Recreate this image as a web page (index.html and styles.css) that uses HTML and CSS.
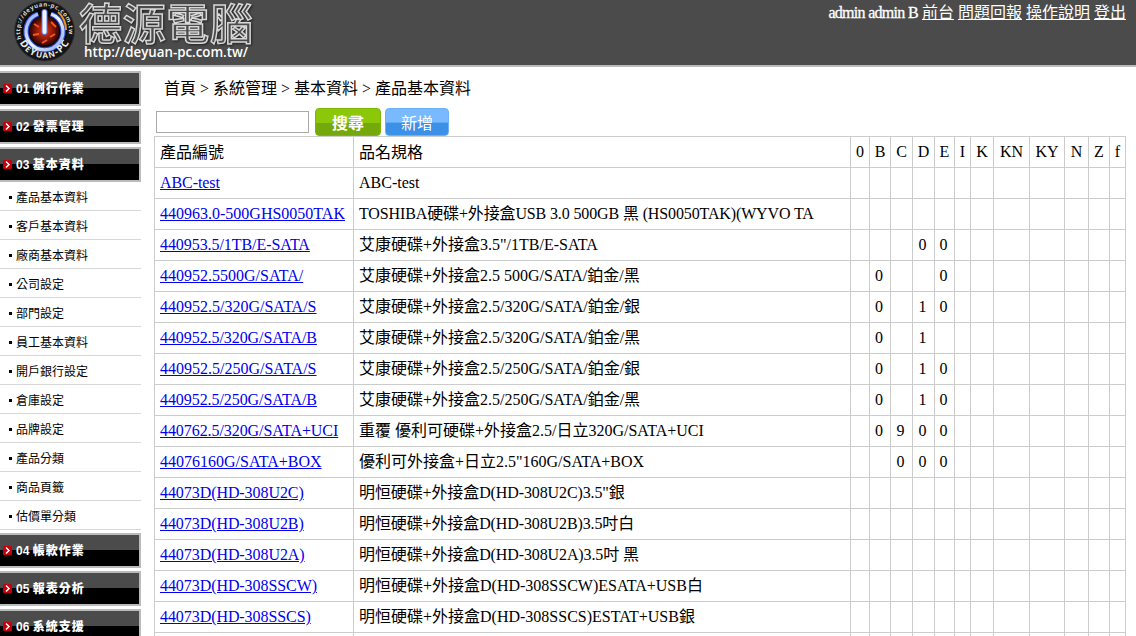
FILE: index.html
```
<!DOCTYPE html>
<html lang="zh-Hant">
<head>
<meta charset="utf-8">
<title>產品基本資料</title>
<link rel="stylesheet" href="styles.css">
</head>
<body>
<svg class="defs" width="0" height="0">
  <symbol id="arrow" viewBox="0 0 9 9"><rect width="9" height="9" rx="1" fill="#c4000c"/><path d="M3 1.500L6 4.500L3 7.500" fill="none" stroke="#fff" stroke-width="1.500"/></symbol>
</svg>
<header class="top">
  <svg class="logo" width="270" height="65" viewBox="0 0 270 65">
    <defs>
      <radialGradient id="core"><stop offset="0" stop-color="#e33a10"/><stop offset=".5" stop-color="#9d1b0a"/><stop offset="1" stop-color="#2a0604"/></radialGradient>
      <linearGradient id="ring" x1="0" y1="0" x2="1" y2="1"><stop offset="0" stop-color="#8fa8f0"/><stop offset=".5" stop-color="#f0f4ff"/><stop offset="1" stop-color="#8fa4ee"/></linearGradient>
      <path id="arcTop" d="M21.500 39A24.400 24.400 0 1 1 67.500 39"/>
      <path id="arcBottom" d="M18 38A27.500 27.500 0 0 0 71 38"/>
    </defs>
    <circle cx="44.500" cy="31" r="30" fill="#151515" stroke="#333"/>
    <circle cx="44.500" cy="31" r="22.500" fill="#050509"/>
    <circle cx="44.500" cy="31" r="15" fill="url(#core)"/>
    <path d="M34 24L39 27M51 22L56 27M33 35L39 34M50 37L55 34M42 43L47 40" stroke="#ef5a22" stroke-width="2"/>
    <path d="M38 14A18.500 18.500 0 1 0 51 14" fill="none" stroke="#2848c8" stroke-width="5.500"/>
    <path d="M38 14A18.500 18.500 0 1 0 51 14" fill="none" stroke="url(#ring)" stroke-width="3.200"/>
    <path d="M44.500 12V32" stroke="#5f7de0" stroke-width="6" stroke-linecap="round"/>
    <path d="M44.500 12V32" stroke="#f2f5ff" stroke-width="4" stroke-linecap="round"/>
    <path d="M58 12Q66 19 66 30" fill="none" stroke="#e8961e" stroke-width="2"/>
    <text class="seal-url"><textPath href="#arcTop" textLength="88">http://deyuan-pc.com.tw</textPath></text>
    <text class="seal-name"><textPath href="#arcBottom" startOffset="5" textLength="61">D<tspan class="small">E</tspan>Y<tspan class="small">UAN</tspan>-PC</textPath></text>
    <text class="brand" x="79" y="39.500" textLength="174">德源電腦</text>
    <text class="brand-url" x="84" y="57" textLength="164" lengthAdjust="spacingAndGlyphs">http://deyuan-pc.com.tw/</text>
  </svg>
  <nav class="user"><span class="who">admin admin B</span> <a href="#">前台</a> <a href="#">問題回報</a> <a href="#">操作說明</a> <a href="#">登出</a></nav>
</header>
<div class="body">
  <aside class="side">
    <div class="head"><svg><use href="#arrow"/></svg>01 <b>例行作業</b></div>
    <div class="head"><svg><use href="#arrow"/></svg>02 <b>發票管理</b></div>
    <div class="head"><svg><use href="#arrow"/></svg>03 <b>基本資料</b></div>
    <ul class="items">
      <li>產品基本資料</li><li>客戶基本資料</li><li>廠商基本資料</li><li>公司設定</li><li>部門設定</li><li>員工基本資料</li><li>開戶銀行設定</li><li>倉庫設定</li><li>品牌設定</li><li>產品分類</li><li>商品頁籤</li><li>估價單分類</li>
    </ul>
    <div class="head"><svg><use href="#arrow"/></svg>04 <b>帳款作業</b></div>
    <div class="head"><svg><use href="#arrow"/></svg>05 <b>報表分析</b></div>
    <div class="head"><svg><use href="#arrow"/></svg>06 <b>系統支援</b></div>
  </aside>
  <main class="main">
    <div class="crumbs">首頁 &gt; 系統管理 &gt; 基本資料 &gt; 產品基本資料</div>
    <form class="tools"><input class="query" type="text"><button class="btn search" type="button">搜尋</button><button class="btn add" type="button">新增</button></form>
    <table class="grid">
      <colgroup><col class="w199"><col class="w497"><col class="w19"><col class="w21"><col class="w22"><col class="w22"><col class="w20"><col class="w16"><col class="w23"><col class="w36"><col class="w35"><col class="w24"><col class="w21"><col class="w16"></colgroup>
      <tr class="titles"><td>產品編號<td>品名規格<td>0<td>B<td>C<td>D<td>E<td>I<td>K<td>KN<td>KY<td>N<td>Z<td>f
      <tr><td><a href="#">ABC-test</a><td>ABC-test<td><td><td><td><td><td><td><td><td><td><td><td>
      <tr><td><a href="#" class="full">440963.0-500GHS0050TAK</a><td class="long">TOSHIBA硬碟+外接盒USB 3.0 500GB 黑 (HS0050TAK)(WYVO TA<td><td><td><td><td><td><td><td><td><td><td><td>
      <tr><td><a href="#">440953.5/1TB/E-SATA</a><td>艾康硬碟+外接盒3.5"/1TB/E-SATA<td><td><td><td>0<td>0<td><td><td><td><td><td><td>
      <tr><td><a href="#" class="full">440952.5500G/SATA/</a><td>艾康硬碟+外接盒2.5 500G/SATA/鉑金/黑<td><td>0<td><td><td>0<td><td><td><td><td><td><td>
      <tr><td><a href="#" class="full">440952.5/320G/SATA/S</a><td>艾康硬碟+外接盒2.5/320G/SATA/鉑金/銀<td><td>0<td><td>1<td>0<td><td><td><td><td><td><td>
      <tr><td><a href="#">440952.5/320G/SATA/B</a><td>艾康硬碟+外接盒2.5/320G/SATA/鉑金/黑<td><td>0<td><td>1<td><td><td><td><td><td><td><td>
      <tr><td><a href="#" class="full">440952.5/250G/SATA/S</a><td>艾康硬碟+外接盒2.5/250G/SATA/鉑金/銀<td><td>0<td><td>1<td>0<td><td><td><td><td><td><td>
      <tr><td><a href="#">440952.5/250G/SATA/B</a><td>艾康硬碟+外接盒2.5/250G/SATA/鉑金/黑<td><td>0<td><td>1<td>0<td><td><td><td><td><td><td>
      <tr><td><a href="#">440762.5/320G/SATA+UCI</a><td>重覆 優利可硬碟+外接盒2.5/日立320G/SATA+UCI<td><td>0<td>9<td>0<td>0<td><td><td><td><td><td><td>
      <tr><td><a href="#" class="full">44076160G/SATA+BOX</a><td>優利可外接盒+日立2.5"160G/SATA+BOX<td><td><td>0<td>0<td>0<td><td><td><td><td><td><td>
      <tr><td><a href="#">44073D(HD-308U2C)</a><td class="tight">明恒硬碟+外接盒D(HD-308U2C)3.5"銀<td><td><td><td><td><td><td><td><td><td><td><td>
      <tr><td><a href="#">44073D(HD-308U2B)</a><td class="tight">明恒硬碟+外接盒D(HD-308U2B)3.5吋白<td><td><td><td><td><td><td><td><td><td><td><td>
      <tr><td><a href="#">44073D(HD-308U2A)</a><td class="tight">明恒硬碟+外接盒D(HD-308U2A)3.5吋 黑<td><td><td><td><td><td><td><td><td><td><td><td>
      <tr><td><a href="#">44073D(HD-308SSCW)</a><td>明恒硬碟+外接盒D(HD-308SSCW)ESATA+USB白<td><td><td><td><td><td><td><td><td><td><td><td>
      <tr><td><a href="#">44073D(HD-308SSCS)</a><td>明恒硬碟+外接盒D(HD-308SSCS)ESTAT+USB銀<td><td><td><td><td><td><td><td><td><td><td><td>
      <tr><td><td><td><td><td><td><td><td><td><td><td><td><td><td>
    </table>
  </main>
</div>
</body>
</html>
```
FILE: styles.css
```
* { box-sizing: border-box; }
html, body { margin: 0; height: 636px; overflow: hidden; background: #fff; }
body { font: 16px/20px "Liberation Serif", "Noto Sans CJK TC", serif; color: #000; }
.defs { display: block; position: absolute; }
.top { display: flex; justify-content: space-between; height: 67px; background: #4b4b4b; border-bottom: 2px solid #bbb; }
.logo { display: block; }
.seal-url { font: bold 6px "Open Sans", sans-serif; fill: #ddd; }
.seal-name { font: bold 10px "Open Sans", sans-serif; fill: #eee; }
.small { font-size: 8px; }
.brand { font: 500 43px "Noto Sans CJK TC", sans-serif; fill: #4b4b4b; stroke: #d8d8d8; stroke-width: 1.500px; filter: drop-shadow(1px 1px 1px #222); }
.brand-url { font: 600 14px "Open Sans", sans-serif; fill: #fff; }
.user { padding: 3px 10px 0 0; color: #fff; white-space: nowrap; }
.user a { color: #fff; }
.who { letter-spacing: -.7px; -webkit-text-stroke: .3px #fff; }
.body { display: flex; }
.side { width: 141px; padding-top: 4px; flex: none; font: 12px/16px "Liberation Sans", "Noto Sans CJK TC", sans-serif; }
.head { display: flex; align-items: center; height: 35px; margin-bottom: 3px; padding-left: 3px; border: 2px solid #bbb; border-left: 0; background: linear-gradient(#4b4b4b 15px, #000 15px); color: #fff; font-weight: bold; white-space: pre; }
.head b { letter-spacing: 1px; }
.head svg { width: 9px; height: 9px; margin-right: 4px; }
.items { list-style: none; margin: -3px 0 3px; padding: 0; }
.items li { display: flex; align-items: center; height: 29px; padding: 3px 0 0 9px; border-bottom: 1px solid #d8d8d8; }
.items li::before { content: ""; width: 3px; height: 3px; margin-right: 4px; background: #000; }
.main { padding-left: 13px; }
.crumbs { height: 41px; padding: 12px 0 0 10px; white-space: nowrap; }
.tools { display: flex; height: 28px; padding-left: 2px; }
.query { width: 153px; height: 22px; margin: 3px 6px 0 0; padding: 0; border: 1px solid #aaa; }
.btn { height: 28px; padding: 0; border-radius: 4px; color: #fff; font: 16px/24px "Noto Sans CJK TC", sans-serif; }
.search { width: 66px; margin-right: 4px; border: 1px solid #7ab800; background: linear-gradient(#8cc70a 55%, #74a80b 55%); font-weight: bold; }
.add { width: 64px; border: 1px solid #6bb0f8; background: linear-gradient(#78b9ff 50%, #3b90e8 55%); }
.grid { table-layout: fixed; width: 972px; border-spacing: 0; border-left: 1px solid #ccc; border-top: 1px solid #ccc; }
.grid td { height: 31px; padding: 0 2px 0 0; border-right: 1px solid #ccc; border-bottom: 1px solid #ccc; line-height: 20px; text-align: center; white-space: nowrap; }
.grid .titles td { padding-right: 0; }
.grid td:nth-child(-n+2) { padding-left: 5px; text-align: left; }
.grid .titles td:nth-child(-n+2) { padding-top: 1px; }
.grid a { color: #00e; letter-spacing: -.07px; }
.grid a.full { letter-spacing: 0; }
.grid .long { letter-spacing: -.13px; }
.grid .tight { letter-spacing: -.11px; }
.w199 { width: 199px; } .w497 { width: 497px; } .w19 { width: 19px; } .w21 { width: 21px; } .w22 { width: 22px; } .w20 { width: 20px; }
.w16 { width: 16px; } .w23 { width: 23px; } .w36 { width: 36px; } .w35 { width: 35px; } .w24 { width: 24px; }
```
